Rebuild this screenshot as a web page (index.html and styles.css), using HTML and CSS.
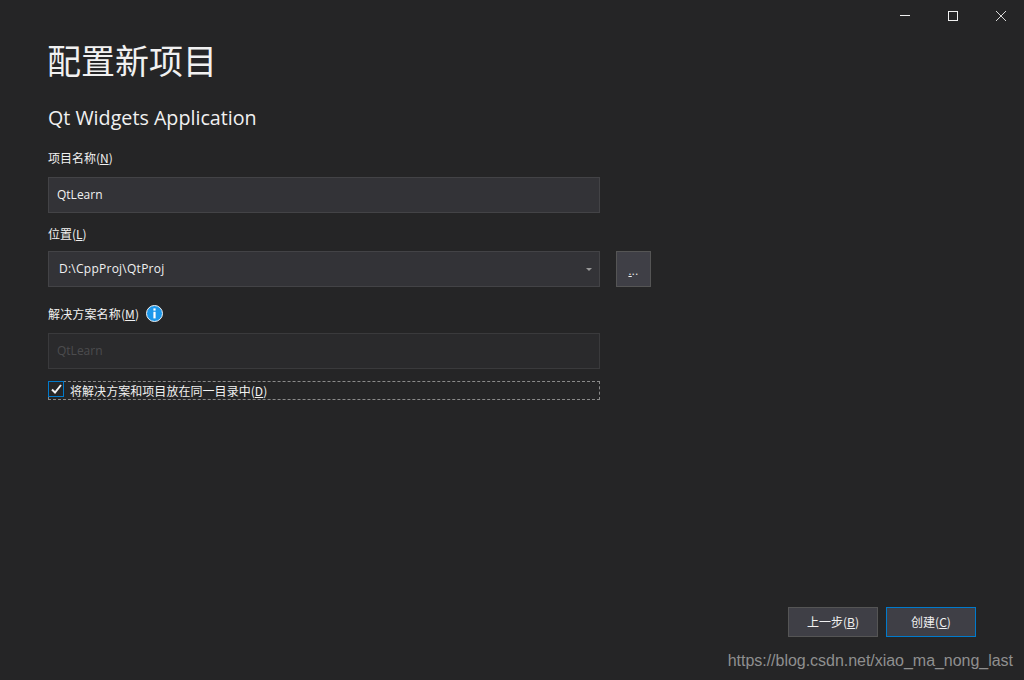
FILE: index.html
```html
<!DOCTYPE html>
<html lang="zh-CN">
<head>
    <meta charset="UTF-8">
    <title>配置新项目</title>
    <link rel="stylesheet" href="styles.css">
</head>
<body>
    <div class="window">
        <div class="title-bar">
            <span class="win-btn">
                <svg width="12" height="12" viewBox="0 0 12 12"><path d="M1 5.5h10" stroke="#f1f1f1" fill="none"/></svg>
            </span>
            <span class="win-btn">
                <svg width="12" height="12" viewBox="0 0 12 12"><rect x="1.5" y="1.5" width="9" height="9" stroke="#f1f1f1" fill="none"/></svg>
            </span>
            <span class="win-btn">
                <svg width="12" height="12" viewBox="0 0 12 12"><path d="M1 1l10 10M11 1L1 11" stroke="#d8d8d8" fill="none"/></svg>
            </span>
        </div>

        <div class="content">
            <h1>配置新项目</h1>
            <h2>Qt Widgets Application</h2>

            <div class="field-label first">项目名称(<u>N</u>)</div>
            <div class="text-input">QtLearn</div>

            <div class="field-label">位置(<u>L</u>)</div>
            <div class="location-row">
                <div class="text-input combo">
                    <span class="combo-text">D:\CppProj\QtProj</span>
                    <span class="caret"></span>
                </div>
                <div class="browse-btn"><u>.</u>..</div>
            </div>

            <div class="field-label solution-label">
                <span>解决方案名称(<u>M</u>)</span>
                <svg class="info-icon" width="17" height="17" viewBox="0 0 17 17">
                    <circle cx="8.5" cy="8.5" r="8" fill="#1c97ea" stroke="#f1f1f1"/>
                    <rect x="7.4" y="3.4" width="2.2" height="2.2" fill="#fff"/>
                    <rect x="7.4" y="6.8" width="2.2" height="6.6" fill="#fff"/>
                </svg>
            </div>
            <div class="text-input disabled">QtLearn</div>

            <div class="check-row">
                <span class="check-box">
                    <svg width="11" height="10" viewBox="0 0 11 10"><path d="M1 5.5l3 3L10 1" stroke="#f1f1f1" stroke-width="2" fill="none"/></svg>
                </span>
                <span class="check-text">将解决方案和项目放在同一目录中(<u>D</u>)</span>
            </div>
        </div>

        <div class="footer">
            <div class="btn">上一步(<u>B</u>)</div>
            <div class="btn primary">创建(<u>C</u>)</div>
        </div>
    </div>
    <div class="watermark">https://blog.csdn.net/xiao_ma_nong_last</div>
</body>
</html>
```

FILE: styles.css
```css
* {
    box-sizing: border-box;
    margin: 0;
    padding: 0;
}
html, body {
    height: 100%;
    overflow: hidden;
}
body {
    background: #252526;
    color: #f1f1f1;
    font-family: "Open Sans", "Noto Sans CJK SC", sans-serif;
    font-size: 12px;
    position: relative;
}
.window {
    height: 680px;
    display: flex;
    flex-direction: column;
}
.title-bar {
    display: flex;
    justify-content: flex-end;
    height: 32px;
    margin-right: -1px;
}
.win-btn {
    width: 48px;
    height: 32px;
    display: flex;
    align-items: center;
    justify-content: center;
}
.content {
    width: 603px;
    margin-left: 48px;
    flex: 1;
}
h1 {
    font-family: "Noto Sans CJK SC", sans-serif;
    font-size: 34px;
    font-weight: 400;
    line-height: 42px;
    margin-top: 7px;
    margin-left: -1px;
}
h2 {
    font-size: 19.7px;
    font-weight: 400;
    line-height: 24px;
    margin-top: 25px;
}
.field-label {
    height: 17px;
    line-height: 17px;
    margin-top: 12px;
    margin-bottom: 9px;
    font-family: "Noto Sans CJK SC", sans-serif;
    color: #f1f1f1;
    white-space: nowrap;
}
.field-label.first {
    margin-top: 19px;
    margin-bottom: 11px;
}
.solution-label {
    display: flex;
    align-items: center;
    gap: 7px;
    margin-top: 18px;
    margin-bottom: 11px;
    letter-spacing: 0.15px;
}
.text-input {
    width: 552px;
    height: 36px;
    line-height: 34px;
    padding: 0 8px;
    background: #333337;
    border: 1px solid #434346;
}
.combo {
    display: flex;
    justify-content: space-between;
    align-items: center;
    padding: 0 7px 0 10px;
}
.combo-text {
    letter-spacing: 0.25px;
}
.caret {
    width: 0;
    height: 0;
    border-left: 3px solid transparent;
    border-right: 3px solid transparent;
    border-top: 3px solid #999;
}
.location-row {
    display: flex;
    gap: 16px;
}
.browse-btn {
    width: 35px;
    height: 36px;
    background: #3f3f46;
    border: 1px solid #555;
    text-align: center;
    line-height: 38px;
    font-size: 11px;
    letter-spacing: 0.5px;
}
.disabled {
    background: #2a2a2c;
    border-color: #3a3a3c;
    color: #4c4c4e;
}
.check-row {
    width: 552px;
    height: 19px;
    margin-top: 12px;
    display: flex;
    align-items: flex-start;
    border: 1px dashed #8a8a8a;
    font-family: "Noto Sans CJK SC", sans-serif;
}
.check-box {
    width: 16px;
    height: 16px;
    margin: -1px 0 0 -1px;
    border: 1px solid #007acc;
    background: #252526;
    display: flex;
    align-items: center;
    justify-content: center;
}
.check-text {
    margin-left: 6px;
    line-height: 17px;
    white-space: nowrap;
    letter-spacing: 0.05px;
}
.footer {
    display: flex;
    justify-content: flex-end;
    gap: 8px;
    padding-right: 48px;
    margin-bottom: 43px;
}
.btn {
    width: 90px;
    height: 30px;
    line-height: 28px;
    text-align: center;
    background: #3f3f46;
    border: 1px solid #555;
    font-family: "Noto Sans CJK SC", sans-serif;
}
.btn.primary {
    border-color: #007acc;
}
.watermark {
    position: absolute;
    right: 11px;
    bottom: 9px;
    font-family: "Liberation Sans", sans-serif;
    font-size: 16px;
    line-height: 20px;
    letter-spacing: -0.03px;
    color: #8f8f8f;
}
```
